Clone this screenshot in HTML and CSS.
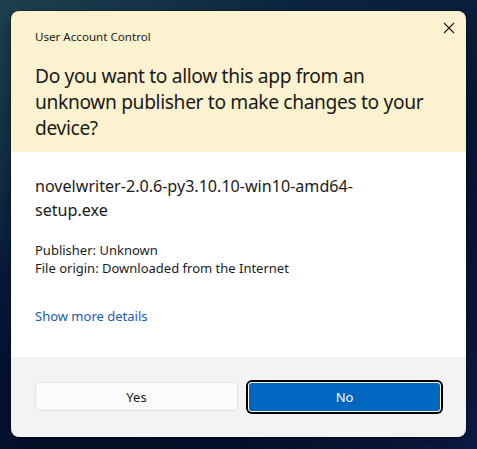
FILE: index.html
```html
<!DOCTYPE html>
<html lang="en">
<head>
<meta charset="utf-8">
<title>User Account Control</title>
<link rel="stylesheet" href="styles.css">
</head>
<body>
<div class="dialog">
  <div class="header">
    <div class="caption">User Account Control</div>
    <button class="close" aria-label="Close">
      <svg width="12" height="12" viewBox="0 0 12 12"><path d="M1 1 L11 11 M11 1 L1 11" stroke="#1b1b1b" stroke-width="1.1" fill="none"/></svg>
    </button>
    <h1 class="question">Do you want to allow this app from an unknown publisher to make changes to your device?</h1>
  </div>
  <div class="content">
    <div class="filename">novelwriter-2.0.6-py3.10.10-win10-amd64-setup.exe</div>
    <div class="meta">
      <div>Publisher: Unknown</div>
      <div>File origin: Downloaded from the Internet</div>
    </div>
    <a class="details" href="#">Show more details</a>
  </div>
  <div class="footer">
    <button class="btn yes">Yes</button>
    <button class="btn no">No</button>
  </div>
</div>
</body>
</html>
```
FILE: styles.css
```css
html, body {
  margin: 0;
  height: 100%;
}
body {
  background:
    radial-gradient(ellipse at 0% 0%, #1d4150 0%, rgba(20,50,70,0) 45%),
    radial-gradient(ellipse at 100% 100%, #0c1d4a 0%, rgba(10,25,70,0) 50%),
    linear-gradient(160deg, #0f2c45 0%, #06173a 50%, #040c26 100%);
  font-family: "Segoe UI", "Noto Sans", sans-serif;
  overflow: hidden;
}
.dialog {
  position: relative;
  margin: 11px 0 0 11px;
  width: 455px;
  height: 426px;
  border-radius: 8px;
  overflow: hidden;
  display: flex;
  flex-direction: column;
  box-shadow: 0 0 0 1px rgba(0,0,0,0.25), 0 6px 18px rgba(0,0,0,0.4);
}
.header {
  position: relative;
  background: #fdf2cf;
  padding: 18px 24px 11px 24px;
  height: 141px;
  box-sizing: border-box;
}
.caption {
  font-size: 11.6px;
  line-height: 16px;
  color: #1b1b1b;
}
.close {
  position: absolute;
  top: 11px;
  right: 11px;
  width: 12px;
  height: 12px;
  padding: 0;
  border: 0;
  background: transparent;
  display: block;
}
.close svg { display: block; }
.question {
  margin: 18px 0 0 0;
  font-size: 19.2px;
  letter-spacing: -0.35px;
  line-height: 26px;
  font-weight: 400;
  color: #1a1a1a;
}
.content {
  background: #ffffff;
  height: 205px;
  box-sizing: border-box;
  padding: 22px 24px 0 24px;
  display: flex;
  flex-direction: column;
  align-items: flex-start;
}
.filename {
  font-size: 16.1px;
  line-height: 24px;
  color: #1a1a1a;
  max-width: 370px;
}
.meta {
  margin-top: 19px;
  font-size: 13px;
  line-height: 18px;
  color: #1b1b1b;
}
.details {
  margin-top: 30px;
  font-size: 13px;
  line-height: 18px;
  color: #1a5bb0;
  text-decoration: none;
}
.footer {
  flex: 1;
  background: #f3f3f3;
  display: flex;
  align-items: flex-start;
  padding: 25px 0 0 24px;
  gap: 11px;
}
.btn {
  font-family: inherit;
  font-size: 13px;
  height: 29px;
  border-radius: 4px;
  padding: 0;
}
.yes {
  width: 203px;
  background: #fbfbfb;
  border: 1px solid #e3e3e3;
  color: #1b1b1b;
}
.no {
  width: 191px;
  margin-top: 1px;
  height: 28px;
  background: #0067c0;
  border: 0;
  color: #ffffff;
  box-shadow: 0 0 0 1px #ffffff, 0 0 0 3px #000000;
  border-radius: 3px;
}
```
